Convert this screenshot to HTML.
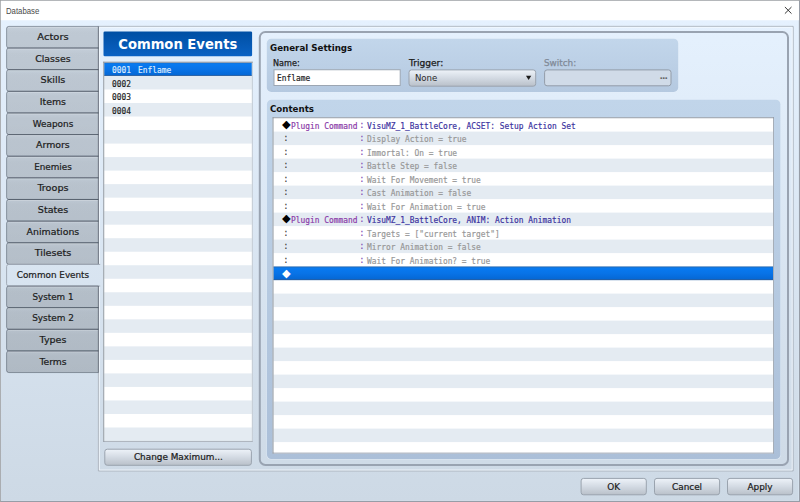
<!DOCTYPE html>
<html lang="en"><head><meta charset="utf-8"><title>Database</title>
<style>
html,body{margin:0;padding:0}
body{width:800px;height:502px;overflow:hidden;position:relative;background:#a3a3a3;font-family:"DejaVu Sans","Liberation Sans",sans-serif;}
svg#bg{position:absolute;left:0;top:0;width:800px;height:502px}
span{position:absolute;box-sizing:border-box;white-space:nowrap;display:block}
#ttext{left:5.9px;top:5.3px;font-family:"Liberation Sans",sans-serif;font-size:9.4px;line-height:12px;color:#4a4a4a;transform:scaleX(0.83);transform-origin:0 0}
.tab{left:6.90px;width:92.00px;height:21.635px;text-align:center;font-size:9.4px;line-height:21.635px;color:#1c1c1c;-webkit-text-stroke:0.22px #1c1c1c}
#hdr{left:103.45px;top:31.6px;width:148.7px;height:25.1px;color:#fff;font-weight:bold;text-align:center;font-size:13.17px;line-height:25.6px}
.m{font-family:"DejaVu Sans Mono","Liberation Mono",monospace;font-size:9.4px;line-height:13.5px;height:13.5px;transform:scaleX(0.8403);transform-origin:0 0;color:#222;-webkit-text-stroke:0.2px currentColor}
.m.col{width:11.32px;text-align:center;color:#7a3fb0;margin-left:-0.6px}
.d{font-size:11.3px;line-height:13.5px;height:13.5px;width:9.51px;text-align:center;color:#000}
.bt{text-align:center;font-size:8.9px;color:#1c1c1c;-webkit-text-stroke:0.22px #1c1c1c}
.bl{font-weight:bold;font-size:8.7px;line-height:12px;color:#111}
.lb{font-size:8.4px;line-height:12px;color:#1c1c1c;-webkit-text-stroke:0.25px #1c1c1c}
</style></head>
<body>
<svg id="bg" viewBox="0 0 800 502" width="800" height="502">
<defs>
<linearGradient id="gb" gradientUnits="userSpaceOnUse" x1="0" y1="20" x2="0" y2="501"><stop offset="0" stop-color="#e5f1fe"/><stop offset="1" stop-color="#cdd9e5"/></linearGradient>
<linearGradient id="gt" x1="0" y1="0" x2="0" y2="1"><stop offset="0" stop-color="#000" stop-opacity="0.14"/><stop offset="0.25" stop-color="#000" stop-opacity="0.165"/><stop offset="1" stop-color="#000" stop-opacity="0.17"/></linearGradient>
<linearGradient id="gh" x1="0" y1="0" x2="0" y2="1"><stop offset="0" stop-color="#004fa3"/><stop offset="1" stop-color="#0a62c4"/></linearGradient>
<linearGradient id="gbtn" x1="0" y1="0" x2="0" y2="1"><stop offset="0" stop-color="#eef3f9"/><stop offset="0.5" stop-color="#d3dae3"/><stop offset="1" stop-color="#b9c0c9"/></linearGradient>
<linearGradient id="gbox" x1="0" y1="0" x2="0" y2="1"><stop offset="0" stop-color="#c2d6eb"/><stop offset="1" stop-color="#b5c9e0"/></linearGradient>
<linearGradient id="gbox2" x1="0" y1="0" x2="0" y2="1"><stop offset="0" stop-color="#c1d5ea"/><stop offset="1" stop-color="#abbfd8"/></linearGradient>
<linearGradient id="gsel" x1="0" y1="0" x2="0" y2="1"><stop offset="0" stop-color="#087cf3"/><stop offset="0.5" stop-color="#0873e7"/><stop offset="1" stop-color="#0566d2"/></linearGradient>
</defs>
<rect x="0.90" y="0.90" width="799.10" height="501.10" rx="0" fill="#979da7" />
<rect x="0.90" y="0.90" width="798.10" height="500.00" rx="0" fill="#d7e3ef" />
<rect x="0.90" y="0.90" width="797.30" height="499.20" rx="0" fill="url(#gb)" />
<rect x="0.90" y="0.90" width="798.10" height="19.35" rx="0" fill="#fff" />
<path d="M784.9 7L791.5 13.6M791.5 7L784.9 13.6" stroke="#2b2b2b" stroke-width="0.95" fill="none"/>
<path d="M98.4 264.38V26.35H793.2V471.0H98.4V286.02" stroke="#adb5bf" stroke-width="1" fill="none"/>
<path d="M99.4 264.88V27.35H792.2V470.0H99.4V285.52" stroke="#f6faff" stroke-opacity="0.75" stroke-width="1" fill="none"/>
<path d="M98.40 26.40H8.80Q6.60 26.40 6.60 28.60V45.83Q6.60 48.03 8.80 48.03H98.40Z" stroke="rgba(40,50,65,0.42)" fill="url(#gt)"/>
<path d="M8.1 27.45H97.69999999999999" stroke="#fff" stroke-opacity="0.22" stroke-width="0.9" fill="none"/>
<path d="M98.40 48.03H8.80Q6.60 48.03 6.60 50.23V67.47Q6.60 69.67 8.80 69.67H98.40Z" stroke="rgba(40,50,65,0.42)" fill="url(#gt)"/>
<path d="M8.1 49.08H97.69999999999999" stroke="#fff" stroke-opacity="0.22" stroke-width="0.9" fill="none"/>
<path d="M98.40 69.67H8.80Q6.60 69.67 6.60 71.87V89.11Q6.60 91.31 8.80 91.31H98.40Z" stroke="rgba(40,50,65,0.42)" fill="url(#gt)"/>
<path d="M8.1 70.72H97.69999999999999" stroke="#fff" stroke-opacity="0.22" stroke-width="0.9" fill="none"/>
<path d="M98.40 91.31H8.80Q6.60 91.31 6.60 93.51V110.74Q6.60 112.94 8.80 112.94H98.40Z" stroke="rgba(40,50,65,0.42)" fill="url(#gt)"/>
<path d="M8.1 92.36H97.69999999999999" stroke="#fff" stroke-opacity="0.22" stroke-width="0.9" fill="none"/>
<path d="M98.40 112.94H8.80Q6.60 112.94 6.60 115.14V132.38Q6.60 134.57 8.80 134.57H98.40Z" stroke="rgba(40,50,65,0.42)" fill="url(#gt)"/>
<path d="M8.1 113.99H97.69999999999999" stroke="#fff" stroke-opacity="0.22" stroke-width="0.9" fill="none"/>
<path d="M98.40 134.58H8.80Q6.60 134.58 6.60 136.78V154.01Q6.60 156.21 8.80 156.21H98.40Z" stroke="rgba(40,50,65,0.42)" fill="url(#gt)"/>
<path d="M8.1 135.63H97.69999999999999" stroke="#fff" stroke-opacity="0.22" stroke-width="0.9" fill="none"/>
<path d="M98.40 156.21H8.80Q6.60 156.21 6.60 158.41V175.65Q6.60 177.84 8.80 177.84H98.40Z" stroke="rgba(40,50,65,0.42)" fill="url(#gt)"/>
<path d="M8.1 157.26H97.69999999999999" stroke="#fff" stroke-opacity="0.22" stroke-width="0.9" fill="none"/>
<path d="M98.40 177.85H8.80Q6.60 177.85 6.60 180.05V197.28Q6.60 199.48 8.80 199.48H98.40Z" stroke="rgba(40,50,65,0.42)" fill="url(#gt)"/>
<path d="M8.1 178.90H97.69999999999999" stroke="#fff" stroke-opacity="0.22" stroke-width="0.9" fill="none"/>
<path d="M98.40 199.48H8.80Q6.60 199.48 6.60 201.68V218.92Q6.60 221.12 8.80 221.12H98.40Z" stroke="rgba(40,50,65,0.42)" fill="url(#gt)"/>
<path d="M8.1 200.53H97.69999999999999" stroke="#fff" stroke-opacity="0.22" stroke-width="0.9" fill="none"/>
<path d="M98.40 221.12H8.80Q6.60 221.12 6.60 223.31V240.55Q6.60 242.75 8.80 242.75H98.40Z" stroke="rgba(40,50,65,0.42)" fill="url(#gt)"/>
<path d="M8.1 222.17H97.69999999999999" stroke="#fff" stroke-opacity="0.22" stroke-width="0.9" fill="none"/>
<path d="M98.40 242.75H8.80Q6.60 242.75 6.60 244.95V262.19Q6.60 264.39 8.80 264.39H98.40Z" stroke="rgba(40,50,65,0.42)" fill="url(#gt)"/>
<path d="M8.1 243.80H97.69999999999999" stroke="#fff" stroke-opacity="0.22" stroke-width="0.9" fill="none"/>
<path d="M100.20 264.38H8.80Q6.60 264.38 6.60 266.58V283.82Q6.60 286.02 8.80 286.02H100.20" stroke="#a0a9b5" fill="none"/>
<path d="M98.40 286.02H8.80Q6.60 286.02 6.60 288.22V305.45Q6.60 307.65 8.80 307.65H98.40Z" stroke="rgba(40,50,65,0.42)" fill="url(#gt)"/>
<path d="M8.1 287.07H97.69999999999999" stroke="#fff" stroke-opacity="0.22" stroke-width="0.9" fill="none"/>
<path d="M98.40 307.65H8.80Q6.60 307.65 6.60 309.85V327.09Q6.60 329.29 8.80 329.29H98.40Z" stroke="rgba(40,50,65,0.42)" fill="url(#gt)"/>
<path d="M8.1 308.70H97.69999999999999" stroke="#fff" stroke-opacity="0.22" stroke-width="0.9" fill="none"/>
<path d="M98.40 329.29H8.80Q6.60 329.29 6.60 331.49V348.73Q6.60 350.93 8.80 350.93H98.40Z" stroke="rgba(40,50,65,0.42)" fill="url(#gt)"/>
<path d="M8.1 330.34H97.69999999999999" stroke="#fff" stroke-opacity="0.22" stroke-width="0.9" fill="none"/>
<path d="M98.40 350.93H8.80Q6.60 350.93 6.60 353.12V370.36Q6.60 372.56 8.80 372.56H98.40Z" stroke="rgba(40,50,65,0.42)" fill="url(#gt)"/>
<path d="M8.1 351.98H97.69999999999999" stroke="#fff" stroke-opacity="0.22" stroke-width="0.9" fill="none"/>
<rect x="103.50" y="31.50" width="148.60" height="24.85" rx="1.3" fill="url(#gh)" />
<rect x="103.35" y="61.70" width="149.35" height="380.10" rx="0" fill="#fff" />
<clipPath id="c1"><rect x="104.19999999999999" y="62.550000000000004" width="147.65" height="378.40000000000003"/></clipPath>
<g clip-path="url(#c1)">
<rect x="103.35" y="62.45" width="149.35" height="13.52" rx="0" fill="url(#gsel)" />
<rect x="103.35" y="62.45" width="149.35" height="0.70" rx="0" fill="#44597a" fill-opacity="0.75"/>
<rect x="103.35" y="75.27" width="149.35" height="0.70" rx="0" fill="#44597a" fill-opacity="0.75"/>
<rect x="103.35" y="75.97" width="149.35" height="13.52" rx="0" fill="#e4ebf2" />
<rect x="103.35" y="103.01" width="149.35" height="13.52" rx="0" fill="#e4ebf2" />
<rect x="103.35" y="130.05" width="149.35" height="13.52" rx="0" fill="#e4ebf2" />
<rect x="103.35" y="157.09" width="149.35" height="13.52" rx="0" fill="#e4ebf2" />
<rect x="103.35" y="184.13" width="149.35" height="13.52" rx="0" fill="#e4ebf2" />
<rect x="103.35" y="211.17" width="149.35" height="13.52" rx="0" fill="#e4ebf2" />
<rect x="103.35" y="238.21" width="149.35" height="13.52" rx="0" fill="#e4ebf2" />
<rect x="103.35" y="265.25" width="149.35" height="13.52" rx="0" fill="#e4ebf2" />
<rect x="103.35" y="292.29" width="149.35" height="13.52" rx="0" fill="#e4ebf2" />
<rect x="103.35" y="319.33" width="149.35" height="13.52" rx="0" fill="#e4ebf2" />
<rect x="103.35" y="346.37" width="149.35" height="13.52" rx="0" fill="#e4ebf2" />
<rect x="103.35" y="373.41" width="149.35" height="13.52" rx="0" fill="#e4ebf2" />
<rect x="103.35" y="400.45" width="149.35" height="13.52" rx="0" fill="#e4ebf2" />
<rect x="103.35" y="427.49" width="149.35" height="13.52" rx="0" fill="#e4ebf2" />
</g>
<rect x="251.85" y="61.70" width="0.85" height="380.10" rx="0" fill="#b6bfcb" />
<rect x="103.35" y="440.95" width="149.35" height="0.85" rx="0" fill="#9da6b0" />
<rect x="103.35" y="61.70" width="149.35" height="0.85" rx="0" fill="#7f8791" />
<rect x="103.35" y="61.70" width="0.85" height="380.10" rx="0" fill="#7f8791" />
<rect x="104.80" y="449.20" width="146.60" height="16.10" rx="2.5" fill="url(#gbtn)" stroke="#9aa3ae" stroke-width="1" />
<rect x="259.80" y="32.00" width="528.20" height="432.90" rx="5.5" fill="none" stroke="#99a3b1" stroke-width="2" />
<rect x="266.30" y="38.20" width="412.40" height="54.20" rx="5" fill="#e6effa" fill-opacity="0.7"/>
<rect x="266.80" y="38.70" width="411.40" height="53.20" rx="4.5" fill="url(#gbox)" />
<rect x="274.00" y="69.75" width="126.20" height="15.75" rx="0" fill="#fff" stroke="#9ca6b2" stroke-width="1" />
<rect x="409.00" y="69.90" width="126.70" height="16.30" rx="2.5" fill="url(#gbtn)" stroke="#9aa3ae" stroke-width="1" />
<path d="M526 75.7H531.3L528.65 80.1Z" fill="#1c1c1c"/>
<rect x="544.60" y="69.90" width="126.40" height="15.90" rx="2.5" fill="#d0dbe8" stroke="#939ca8" stroke-width="1" />
<rect x="266.40" y="99.40" width="514.60" height="360.20" rx="5" fill="#e6effa" fill-opacity="0.7"/>
<rect x="266.90" y="99.75" width="513.50" height="359.25" rx="4.5" fill="url(#gbox2)" />
<rect x="272.60" y="117.35" width="501.40" height="336.15" rx="0" fill="#fff" />
<clipPath id="c2"><rect x="273.45000000000005" y="118.19999999999999" width="499.7" height="334.45"/></clipPath>
<g clip-path="url(#c2)">
<rect x="272.60" y="131.60" width="501.40" height="13.50" rx="0" fill="#e4ebf2" />
<rect x="272.60" y="158.60" width="501.40" height="13.50" rx="0" fill="#e4ebf2" />
<rect x="272.60" y="185.60" width="501.40" height="13.50" rx="0" fill="#e4ebf2" />
<rect x="272.60" y="212.60" width="501.40" height="13.50" rx="0" fill="#e4ebf2" />
<rect x="272.60" y="239.60" width="501.40" height="13.50" rx="0" fill="#e4ebf2" />
<rect x="272.60" y="266.60" width="501.40" height="13.50" rx="0" fill="url(#gsel)" />
<rect x="272.60" y="266.60" width="501.40" height="0.70" rx="0" fill="#44597a" fill-opacity="0.75"/>
<rect x="272.60" y="279.40" width="501.40" height="0.70" rx="0" fill="#44597a" fill-opacity="0.75"/>
<rect x="272.60" y="293.60" width="501.40" height="13.50" rx="0" fill="#e4ebf2" />
<rect x="272.60" y="320.60" width="501.40" height="13.50" rx="0" fill="#e4ebf2" />
<rect x="272.60" y="347.60" width="501.40" height="13.50" rx="0" fill="#e4ebf2" />
<rect x="272.60" y="374.60" width="501.40" height="13.50" rx="0" fill="#e4ebf2" />
<rect x="272.60" y="401.60" width="501.40" height="13.50" rx="0" fill="#e4ebf2" />
<rect x="272.60" y="428.60" width="501.40" height="13.50" rx="0" fill="#e4ebf2" />
<rect x="272.60" y="455.60" width="501.40" height="13.50" rx="0" fill="#e4ebf2" />
</g>
<rect x="773.15" y="117.35" width="0.85" height="336.15" rx="0" fill="#97a0ac" />
<rect x="272.60" y="452.65" width="501.40" height="0.85" rx="0" fill="#97a0ac" />
<rect x="272.60" y="117.35" width="501.40" height="0.85" rx="0" fill="#858d98" />
<rect x="272.60" y="117.35" width="0.85" height="336.15" rx="0" fill="#7f8791" />
<rect x="581.10" y="478.40" width="65.20" height="16.40" rx="2.5" fill="url(#gbtn)" stroke="#9aa3ae" stroke-width="1" />
<rect x="654.50" y="478.40" width="65.10" height="16.40" rx="2.5" fill="url(#gbtn)" stroke="#9aa3ae" stroke-width="1" />
<rect x="727.50" y="478.40" width="65.10" height="16.40" rx="2.5" fill="url(#gbtn)" stroke="#9aa3ae" stroke-width="1" />
</svg>
<span id="ttext">Database</span>
<span class="tab" style="top:26.00px;transform:scaleX(1.06)">Actors</span>
<span class="tab" style="top:47.63px">Classes</span>
<span class="tab" style="top:69.27px;transform:scaleX(1.03)">Skills</span>
<span class="tab" style="top:90.91px">Items</span>
<span class="tab" style="top:112.54px;transform:scaleX(0.95)">Weapons</span>
<span class="tab" style="top:134.18px">Armors</span>
<span class="tab" style="top:155.81px;transform:scaleX(0.94)">Enemies</span>
<span class="tab" style="top:177.45px;transform:scaleX(1.03)">Troops</span>
<span class="tab" style="top:199.08px;transform:scaleX(1.02)">States</span>
<span class="tab" style="top:220.72px">Animations</span>
<span class="tab" style="top:242.35px;transform:scaleX(1.03)">Tilesets</span>
<span class="tab" style="top:263.99px;transform:scaleX(0.94)">Common Events</span>
<span class="tab" style="top:285.62px;transform:scaleX(0.935)">System 1</span>
<span class="tab" style="top:307.25px;transform:scaleX(0.95)">System 2</span>
<span class="tab" style="top:328.89px;transform:scaleX(1.015)">Types</span>
<span class="tab" style="top:350.53px;transform:scaleX(0.985)">Terms</span>
<span id="hdr">Common Events</span>
<span class="m" style="left:112.3px;top:63.00px;color:#dcebff">0001</span>
<span class="m" style="left:138.0px;top:63.00px;color:#dcebff">Enflame</span>
<span class="m" style="left:112.3px;top:76.52px;color:#222">0002</span>
<span class="m" style="left:112.3px;top:90.04px;color:#222">0003</span>
<span class="m" style="left:112.3px;top:103.56px;color:#222">0004</span>
<span class="bt" style="left:104.6px;top:449.4px;width:147.6px;line-height:17.6px">Change Maximum...</span>
<span class="bl" style="left:270px;top:42.1px">General Settings</span>
<span class="lb" style="left:272.8px;top:56.8px;transform:scaleX(0.97);transform-origin:0 0">Name:</span>
<span class="lb" style="left:408.6px;top:57px;transform:scaleX(1.085);transform-origin:0 0">Trigger:</span>
<span class="lb" style="left:543.6px;top:57px;color:#808a97;-webkit-text-stroke-color:#808a97;transform:scaleX(1.055);transform-origin:0 0">Switch:</span>
<span class="m" style="left:276.5px;top:71.15px">Enflame</span>
<span style="left:414.9px;top:71.6px;font-size:8.6px;line-height:12px;color:#2a2a2a">None</span>
<span style="left:659.4px;top:70.3px;font-size:9px;line-height:12px;color:#666;font-weight:bold;letter-spacing:-0.9px">...</span>
<span class="bl" style="left:269.9px;top:102.8px">Contents</span>
<span class="d" style="left:281.60px;top:117.80px">◆</span>
<span class="m" style="left:291.11px;top:118.65px;color:#8a3aa8">Plugin Command</span>
<span class="m col" style="left:357.68px;top:117.75px">:</span>
<span class="m" style="left:367.19px;top:118.65px;color:#3b32a0">VisuMZ_1_BattleCore, ACSET: Setup Action Set</span>
<span class="m col" style="left:281.60px;top:131.25px;color:#333">:</span>
<span class="m col" style="left:357.68px;top:131.25px">:</span>
<span class="m" style="left:367.19px;top:132.15px;color:#979797">Display Action = true</span>
<span class="m col" style="left:281.60px;top:144.75px;color:#333">:</span>
<span class="m col" style="left:357.68px;top:144.75px">:</span>
<span class="m" style="left:367.19px;top:145.65px;color:#979797">Immortal: On = true</span>
<span class="m col" style="left:281.60px;top:158.25px;color:#333">:</span>
<span class="m col" style="left:357.68px;top:158.25px">:</span>
<span class="m" style="left:367.19px;top:159.15px;color:#979797">Battle Step = false</span>
<span class="m col" style="left:281.60px;top:171.75px;color:#333">:</span>
<span class="m col" style="left:357.68px;top:171.75px">:</span>
<span class="m" style="left:367.19px;top:172.65px;color:#979797">Wait For Movement = true</span>
<span class="m col" style="left:281.60px;top:185.25px;color:#333">:</span>
<span class="m col" style="left:357.68px;top:185.25px">:</span>
<span class="m" style="left:367.19px;top:186.15px;color:#979797">Cast Animation = false</span>
<span class="m col" style="left:281.60px;top:198.75px;color:#333">:</span>
<span class="m col" style="left:357.68px;top:198.75px">:</span>
<span class="m" style="left:367.19px;top:199.65px;color:#979797">Wait For Animation = true</span>
<span class="d" style="left:281.60px;top:212.30px">◆</span>
<span class="m" style="left:291.11px;top:213.15px;color:#8a3aa8">Plugin Command</span>
<span class="m col" style="left:357.68px;top:212.25px">:</span>
<span class="m" style="left:367.19px;top:213.15px;color:#3b32a0">VisuMZ_1_BattleCore, ANIM: Action Animation</span>
<span class="m col" style="left:281.60px;top:225.75px;color:#333">:</span>
<span class="m col" style="left:357.68px;top:225.75px">:</span>
<span class="m" style="left:367.19px;top:226.65px;color:#979797">Targets = [&quot;current target&quot;]</span>
<span class="m col" style="left:281.60px;top:239.25px;color:#333">:</span>
<span class="m col" style="left:357.68px;top:239.25px">:</span>
<span class="m" style="left:367.19px;top:240.15px;color:#979797">Mirror Animation = false</span>
<span class="m col" style="left:281.60px;top:252.75px;color:#333">:</span>
<span class="m col" style="left:357.68px;top:252.75px">:</span>
<span class="m" style="left:367.19px;top:253.65px;color:#979797">Wait For Animation? = true</span>
<span class="d" style="left:281.60px;top:267.00px;color:#fff">◆</span>
<span class="bt" style="left:580.6px;top:477.9px;width:66.2px;line-height:18.2px">OK</span>
<span class="bt" style="left:654.0px;top:477.9px;width:66.1px;line-height:18.2px">Cancel</span>
<span class="bt" style="left:727.0px;top:477.9px;width:66.1px;line-height:18.2px">Apply</span>
</body></html>
